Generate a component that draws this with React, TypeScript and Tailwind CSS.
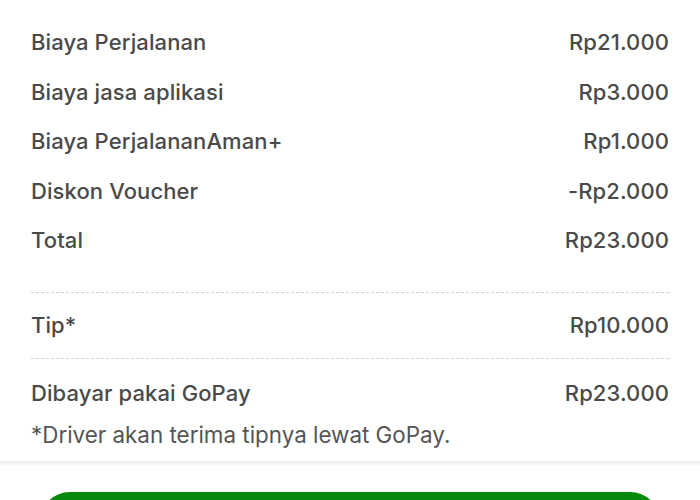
import React from "react";

const rows: [string, string][] = [
  ["Biaya Perjalanan", "Rp21.000"],
  ["Biaya jasa aplikasi", "Rp3.000"],
  ["Biaya PerjalananAman+", "Rp1.000"],
  ["Diskon Voucher", "-Rp2.000"],
  ["Total", "Rp23.000"],
];

function Row({ label, value, cls }: { label: string; value: string; cls: string }) {
  return (
    <div className={`flex items-center justify-between ${cls}`}>
      <span>{label}</span>
      <span>{value}</span>
    </div>
  );
}

export default function App() {
  return (
    <div
      className="w-[700px] h-[500px] overflow-hidden bg-white text-[#4a4a4a]"
      style={{ fontFamily: "Inter, 'Noto Sans', sans-serif" }}
    >
      <div className="px-[31px] pt-[18px] text-[22px] font-medium tracking-[0.1px]">
        {rows.map(([l, v]) => (
          <Row key={l} label={l} value={v} cls="h-[49.5px]" />
        ))}
        <div className="h-[26px]" />
        <div className="border-t border-dashed border-[#d4d4d4]" />
        <Row label="Tip*" value="Rp10.000" cls="h-[65px]" />
        <div className="border-t border-dashed border-[#d4d4d4]" />
        <Row label="Dibayar pakai GoPay" value="Rp23.000" cls="h-[50px] mt-[10px]" />
        <div className="h-[32px] flex items-center font-normal text-[#555] text-[22.4px] tracking-[0px]">
          *Driver akan terima tipnya lewat GoPay.
        </div>
      </div>
      <div className="h-[10px]" />
      <div className="h-[4px] bg-gradient-to-b from-[#ececec] to-[#f8f8f8]" />
      <div className="px-[40px] pt-[27px]">
        <div className="h-[60px] rounded-[30px] bg-[#058a0b]" />
      </div>
    </div>
  );
}
